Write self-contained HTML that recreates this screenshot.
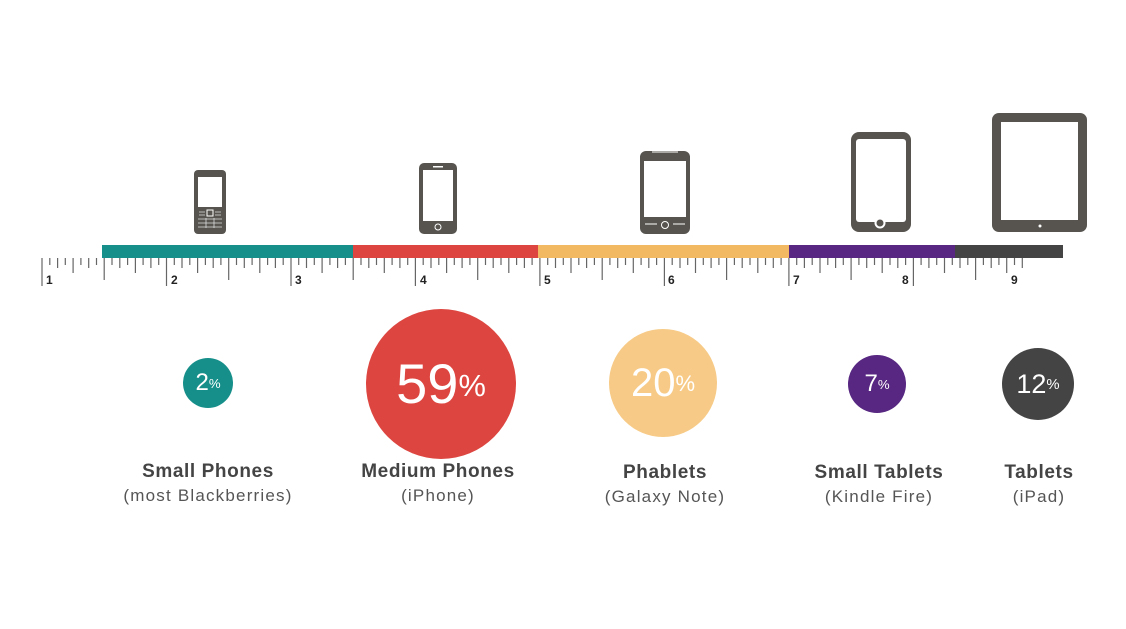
<!DOCTYPE html>
<html><head><style>
body{margin:0;width:1126px;height:629px;background:#fff;position:relative;overflow:hidden;font-family:"Liberation Sans",sans-serif}
.c{position:absolute;border-radius:50%;color:#fff;text-align:center;font-weight:500}
.c span{font-size:0.55em;vertical-align:top;position:relative;top:0.05em}
.t{position:absolute;text-align:center;color:#444;width:240px}
.t b{display:block;font-size:19px;font-weight:bold;color:#444;letter-spacing:0.6px}
.t i{display:block;font-style:normal;font-size:17px;color:#555;margin-top:3px;letter-spacing:1.2px}
</style></head><body>
<svg width="1126" height="629" style="position:absolute;left:0;top:0">
<g fill="#57544f">
<rect x="194" y="170" width="32" height="64" rx="4"/>
<rect x="198" y="177" width="24" height="30" fill="#fff"/>
<rect x="207" y="210" width="6" height="6" fill="none" stroke="#fff" stroke-width="1"/>
<path d="M199 212h6M215 212h6M199 215h6M215 215h6M198 219h24M198 223h24M198 227h24M206 218v10M214 218v10" stroke="#ddd" stroke-width="0.8"/>
<rect x="419" y="163" width="38" height="71" rx="5"/>
<rect x="423" y="170" width="30" height="51" fill="#fff"/>
<rect x="433" y="166" width="10" height="1.5" fill="#fff"/>
<circle cx="438" cy="227" r="3" fill="none" stroke="#fff" stroke-width="1"/>
<rect x="640" y="151" width="50" height="83" rx="6"/>
<rect x="644" y="161" width="42" height="56" fill="#fff"/>
<circle cx="665" cy="225" r="3.5" fill="none" stroke="#fff" stroke-width="1"/>
<path d="M645 224h12M673 224h12M652 152h26" stroke="#fff" stroke-width="1" fill="none"/>
<rect x="851" y="132" width="60" height="100" rx="8"/>
<rect x="856" y="139" width="50" height="83" rx="3" fill="#fff"/>
<circle cx="880" cy="223" r="5.5" fill="#fff"/>
<circle cx="880" cy="223" r="3.5"/>
<rect x="992" y="113" width="95" height="119" rx="7"/>
<rect x="1001" y="122" width="77" height="98" fill="#fff"/>
<circle cx="1040" cy="226" r="1.5" fill="#fff"/>
</g>
<g>
<rect x="102" y="245" width="251" height="13" fill="#168f8a"/>
<rect x="353" y="245" width="185" height="13" fill="#dd4640"/>
<rect x="538" y="245" width="251" height="13" fill="#f3b862"/>
<rect x="789" y="245" width="166" height="13" fill="#572781"/>
<rect x="955" y="245" width="108" height="13" fill="#444"/>
</g>
<g id="ticks" stroke="#666" stroke-width="1.2"></g>
<g font-family="Liberation Sans" font-weight="bold" font-size="12" fill="#222">
<text x="46" y="284">1</text><text x="171" y="284">2</text><text x="295" y="284">3</text><text x="420" y="284">4</text><text x="544" y="284">5</text><text x="668" y="284">6</text><text x="793" y="284">7</text><text x="902" y="284">8</text><text x="1011" y="284">9</text>
</g>
</svg>
<script>
var g=document.getElementById('ticks'),s='';
for(var i=0;i<=130;i++){var x=42+i*7.78;if(x>1030)break;var k=i%16,h;
if(k==0)h=28;else if(k==8)h=22;else if(k%4==0)h=15;else if(k%2==0)h=10;else h=7;
s+='<line x1="'+x.toFixed(1)+'" y1="258" x2="'+x.toFixed(1)+'" y2="'+(258+h)+'"/>';}
g.innerHTML=s;
</script>
<div class="c" style="left:183px;top:358px;width:50px;height:50px;background:#168f8a;font-size:24px;line-height:50px">2<span>%</span></div>
<div class="c" style="left:366px;top:309px;width:150px;height:150px;background:#dd4640;font-size:56px;line-height:150px">59<span>%</span></div>
<div class="c" style="left:609px;top:329px;width:108px;height:108px;background:#f7cb87;font-size:40px;line-height:108px">20<span>%</span></div>
<div class="c" style="left:848px;top:355px;width:58px;height:58px;background:#572781;font-size:24px;line-height:58px">7<span>%</span></div>
<div class="c" style="left:1002px;top:348px;width:72px;height:72px;background:#444;font-size:27px;line-height:72px">12<span>%</span></div>
<div class="t" style="left:88px;top:461px"><b>Small Phones</b><i>(most Blackberries)</i></div>
<div class="t" style="left:318px;top:461px"><b>Medium Phones</b><i>(iPhone)</i></div>
<div class="t" style="left:545px;top:462px"><b>Phablets</b><i>(Galaxy Note)</i></div>
<div class="t" style="left:759px;top:462px"><b>Small Tablets</b><i>(Kindle Fire)</i></div>
<div class="t" style="left:919px;top:462px"><b>Tablets</b><i>(iPad)</i></div>
</body></html>
